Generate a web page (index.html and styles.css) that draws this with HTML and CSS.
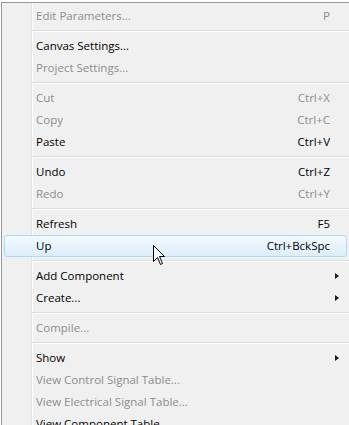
FILE: index.html
```html
<!DOCTYPE html>
<html>
<head>
<meta charset="utf-8">
<link rel="stylesheet" href="styles.css">
</head>
<body>
<div class="menu">
  <div class="item disabled"><span class="label">Edit Parameters...</span><span class="key">P</span><span class="sub"></span></div>
  <div class="sep"></div>
  <div class="item"><span class="label">Canvas Settings...</span><span class="key"></span><span class="sub"></span></div>
  <div class="item disabled"><span class="label">Project Settings...</span><span class="key"></span><span class="sub"></span></div>
  <div class="sep"></div>
  <div class="item disabled"><span class="label">Cut</span><span class="key">Ctrl+X</span><span class="sub"></span></div>
  <div class="item disabled"><span class="label">Copy</span><span class="key">Ctrl+C</span><span class="sub"></span></div>
  <div class="item"><span class="label">Paste</span><span class="key">Ctrl+V</span><span class="sub"></span></div>
  <div class="sep"></div>
  <div class="item"><span class="label">Undo</span><span class="key">Ctrl+Z</span><span class="sub"></span></div>
  <div class="item disabled"><span class="label">Redo</span><span class="key">Ctrl+Y</span><span class="sub"></span></div>
  <div class="sep"></div>
  <div class="item"><span class="label">Refresh</span><span class="key">F5</span><span class="sub"></span></div>
  <div class="item hover"><span class="label">Up</span><span class="key">Ctrl+BckSpc</span><span class="sub"></span>
    <svg class="cursor" width="13" height="21" viewBox="0 0 13 21"><path d="M0.5 0.5 L0.5 16.5 L4.5 12.5 L7.5 19.5 L9.5 18.5 L6.5 11.5 L11.5 11.5 Z" fill="#fff" stroke="#000" stroke-width="1" stroke-linejoin="miter"/></svg>
  </div>
  <div class="sep"></div>
  <div class="item"><span class="label">Add Component</span><span class="key"></span><span class="sub"><i class="arrow"></i></span></div>
  <div class="item"><span class="label">Create...</span><span class="key"></span><span class="sub"><i class="arrow"></i></span></div>
  <div class="sep"></div>
  <div class="item disabled"><span class="label">Compile...</span><span class="key"></span><span class="sub"></span></div>
  <div class="sep"></div>
  <div class="item"><span class="label">Show</span><span class="key"></span><span class="sub"><i class="arrow"></i></span></div>
  <div class="item disabled"><span class="label">View Control Signal Table...</span><span class="key"></span><span class="sub"></span></div>
  <div class="item disabled"><span class="label">View Electrical Signal Table...</span><span class="key"></span><span class="sub"></span></div>
  <div class="item"><span class="label">View Component Table...</span><span class="key"></span><span class="sub"></span></div>
</div>
</body>
</html>
```
FILE: styles.css
```css
html, body {
  margin: 0;
  padding: 0;
  background: #ffffff;
  overflow: hidden;
}
body {
  font-family: "Open Sans", "Noto Sans", sans-serif;
  font-size: 11.5px;
  color: #000;
}
.menu {
  margin: 2px 0 0 1px;
  width: 360px;
  border-left: 1px solid #979797;
  border-top: 1px solid #979797;
  padding: 2px 0;
  background: linear-gradient(to right, #f0f0f0 29px, #e2e3e3 29px, #e2e3e3 30px, #ffffff 30px, #ffffff 31px, #f0f0f0 31px);
  background-color: #f0f0f0;
}
.item {
  position: relative;
  display: grid;
  grid-template-columns: 1fr auto 16px;
  align-items: center;
  height: 20px;
  line-height: 19px;
  margin: 0 15px 0 2px;
  padding-left: 31px;
  border: 1px solid transparent;
  border-radius: 3px;
  white-space: nowrap;
}
.item.disabled { color: #8d8d8d; }
.item.hover {
  border-color: #aedaf0;
  background: linear-gradient(#f2f9fd, #dcedf9);
}
.label, .key { padding-bottom: 1px; }
.key { text-align: right; }
.sub { display: flex; align-items: center; padding-left: 5px; }
.arrow {
  display: block;
  width: 0; height: 0;
  border-top: 3.5px solid transparent;
  border-bottom: 3.5px solid transparent;
  border-left: 4px solid #1a1a1a;
}
.sep {
  height: 8px;
  display: flex;
  align-items: center;
  margin-left: 30px;
}
.sep::before {
  content: "";
  display: block;
  width: 100%;
  height: 1px;
  border-bottom: 1px solid #ffffff;
  background: #dddddd;
}
.cursor {
  position: absolute;
  left: 148px;
  top: 9px;
}
```
